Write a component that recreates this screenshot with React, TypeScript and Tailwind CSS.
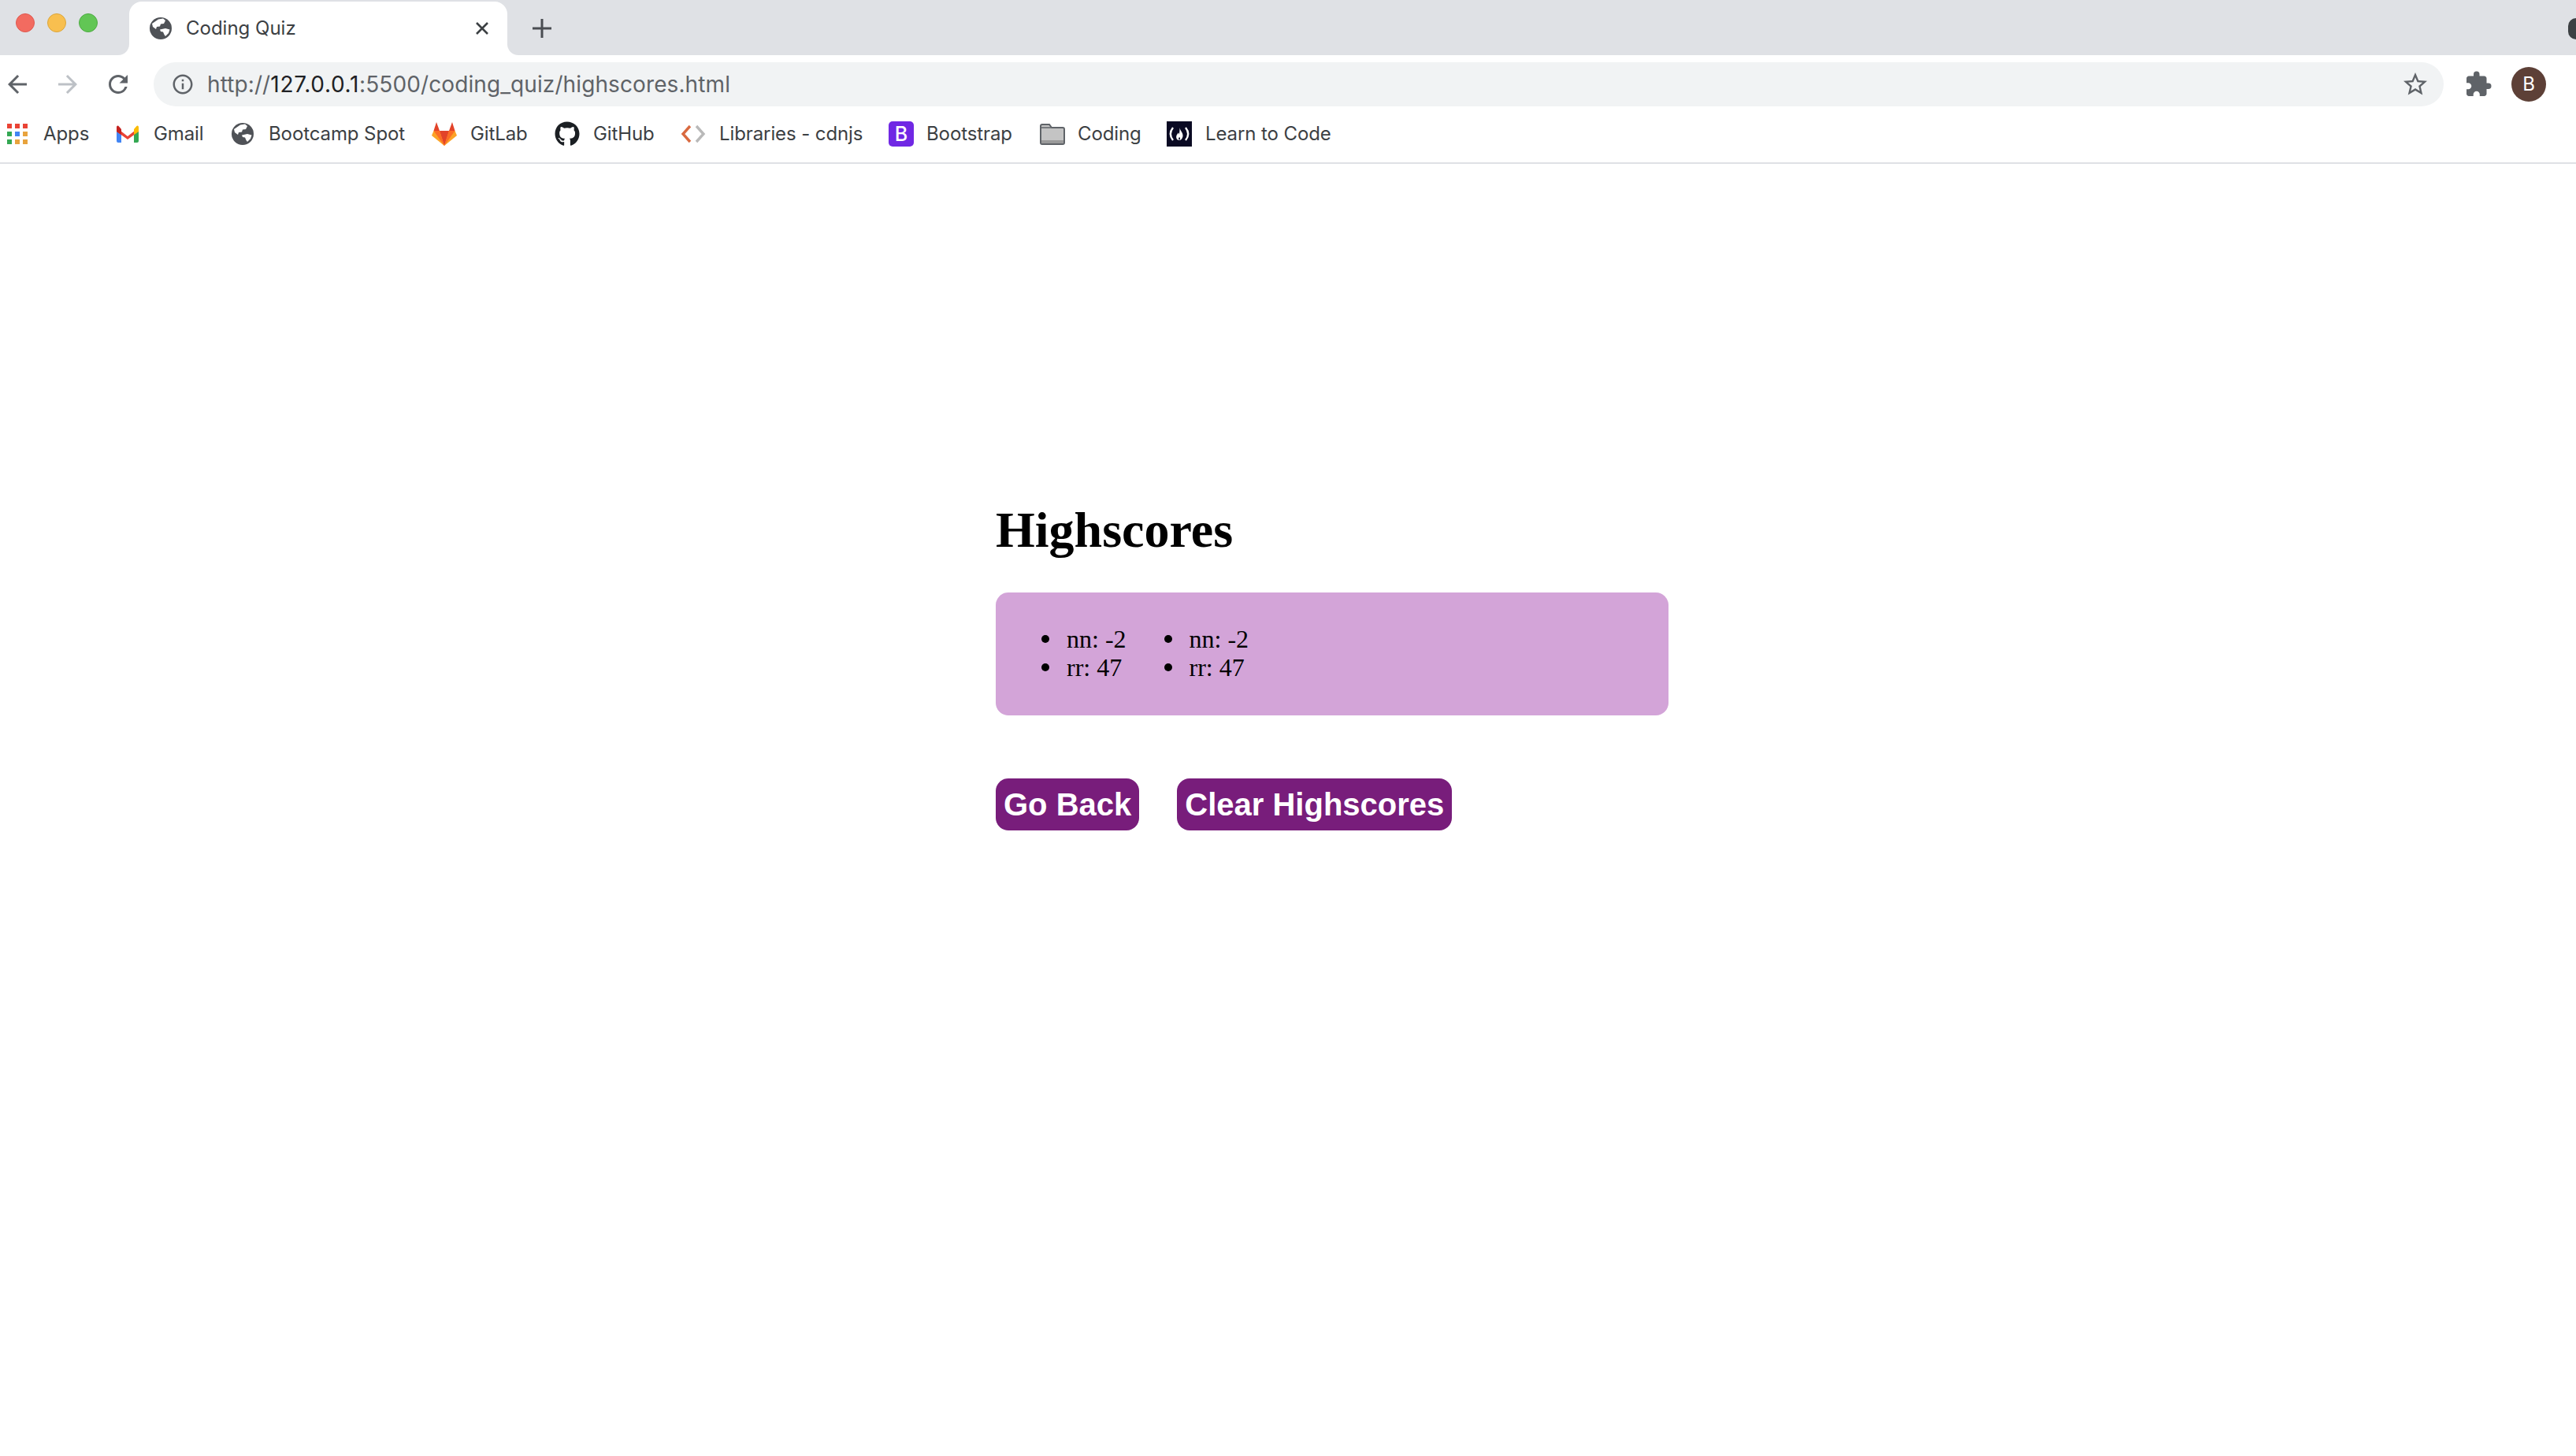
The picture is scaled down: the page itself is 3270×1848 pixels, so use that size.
import { FaGithub } from "react-icons/fa";
import { MdArrowBack, MdArrowForward, MdExtension, MdInfoOutline, MdRefresh, MdStarBorder } from "react-icons/md";
import type { ReactNode } from "react";

const Globe = ({ className = "" }: { className?: string }) => (
  <svg viewBox="0 0 28 28" className={`h-7 w-7 shrink-0 ${className}`}>
    <circle cx="14" cy="14" r="14" fill="#4f5257" />
    <path d="M11 2.500 17 1.500 20 4 18 8 14 8.500 13 11.500 9 12 8 15 4 12 3 8Z" fill="#fff" />
    <path d="M13 15.500 20 14 25.500 15.500 24 20 20 24 18.500 22 17 18.500 14 18Z" fill="#fff" />
  </svg>
);

const Gmail = () => (
  <svg viewBox="0 0 28 22" className="h-[22px] w-7 shrink-0">
    <path d="M0 2V20a2 2 0 0 0 2 2H6V9Z" fill="#4285f4" />
    <path d="M28 2V20a2 2 0 0 1-2 2H22V9Z" fill="#34a853" />
    <path d="M0 3 14 14 28 3V8L14 18 0 8Z" fill="#ea4335" />
    <path d="M22 5 25 1.500C26 0 28 0 28 3V8L22 12Z" fill="#fbbc04" />
    <path d="M6 5 3 1.500C2 0 0 0 0 3V8L6 12Z" fill="#c5221f" />
  </svg>
);

const GitLab = () => (
  <svg viewBox="0 0 32 32" className="h-8 w-8 shrink-0">
    <path d="M16 31 0 18 2.500 12H29.500L32 18Z" fill="#fca326" />
    <path d="M16 31 10 12H22Z" fill="#e24329" />
    <path d="M16 31 10 12H2.500Z" fill="#fc6d26" />
    <path d="M16 31 22 12H29.500Z" fill="#fc6d26" />
    <path d="M2.500 12 6 1 10 12Z" fill="#e24329" />
    <path d="M29.500 12 26 1 22 12Z" fill="#e24329" />
  </svg>
);

const Bookmark = ({ icon, label, width }: { icon: ReactNode; label: string; width: string }) => (
  <div className={`flex items-center ${width}`}>
    {icon}
    <span className="whitespace-nowrap text-[24px] leading-none tracking-[-0.1px] text-[#3c4043]">{label}</span>
  </div>
);

const colours = ["#ea4335", "#ea4335", "#ea4335", "#34a853", "#4285f4", "#e8a33d", "#34a853", "#e8a33d", "#e8a33d"];

export default function App() {
  return (
    <div className="min-h-[1848px] bg-white font-['Inter','Liberation_Sans',sans-serif]">
      {/* tab strip */}
      <div className="flex h-[70px] items-start bg-[#dfe1e5] pt-[2px]">
        <div className="flex h-[54px] items-center gap-[16px] pl-[20px]">
          <span className="h-6 w-6 rounded-full border border-[#e0584f] bg-[#f26b60]" />
          <span className="h-6 w-6 rounded-full border border-[#dba63c] bg-[#f8bf4f]" />
          <span className="h-6 w-6 rounded-full border border-[#4eab43] bg-[#62c655]" />
        </div>
        <div className="relative ml-[40px] flex h-[68px] w-[480px] items-center rounded-t-[16px] bg-white pl-[26px] pr-[22px]">
          <span className="absolute -left-[14px] bottom-0 h-[14px] w-[14px] bg-white" />
          <span className="absolute -left-[14px] bottom-0 h-[14px] w-[14px] rounded-br-[14px] bg-[#dfe1e5]" />
          <span className="absolute -right-[14px] bottom-0 h-[14px] w-[14px] bg-white" />
          <span className="absolute -right-[14px] bottom-0 h-[14px] w-[14px] rounded-bl-[14px] bg-[#dfe1e5]" />
          <Globe />
          <span className="ml-[18px] flex-1 text-[24px] leading-none text-[#3c4043]">Coding Quiz</span>
          <svg viewBox="0 0 20 20" className="h-5 w-5"><path d="M3 3 17 17M17 3 3 17" stroke="#3c4043" strokeWidth="2.6" /></svg>
        </div>
        <svg viewBox="0 0 24 24" className="ml-[32px] mt-[22px] h-6 w-6"><path d="M12 0V24M0 12H24" stroke="#4a4d52" strokeWidth="3" /></svg>
        <div className="ml-auto mt-[21px] h-[27px] w-[10px] rounded-l-full bg-[#3c4043]" />
      </div>

      {/* toolbar */}
      <div className="flex h-[75px] items-center pb-[3px] pt-[1px]">
        <MdArrowBack className="ml-[4px] h-9 w-9 text-[#5f6368]" />
        <MdArrowForward className="ml-[28px] h-9 w-9 text-[#bdc1c6]" />
        <MdRefresh className="ml-[28px] h-9 w-9 text-[#5f6368]" />
        <div className="ml-[27px] flex h-[56px] w-[2907px] items-center rounded-full bg-[#f1f3f4] pl-[22px] pr-[18px]">
          <MdInfoOutline className="h-[30px] w-[30px] text-[#5f6368]" />
          <span className="ml-[16px] text-[28px] leading-none tracking-[0.1px] text-[#5f6368]">
            http://<span className="tracking-[0.7px] text-[#202124]">127.0.0.1</span>:5500/coding_quiz/highscores.html
          </span>
          <MdStarBorder className="ml-auto h-9 w-9 text-[#5f6368]" />
        </div>
        <MdExtension className="ml-[26px] h-9 w-9 text-[#5f6368]" />
        <div className="ml-[24px] flex h-11 w-11 items-center justify-center rounded-full bg-[#5d4037] text-[24px] leading-none text-white">B</div>
      </div>

      {/* bookmarks */}
      <div className="flex h-[63px] items-center border-b-2 border-[#dfe1e5] pb-[11px] pl-[8px]">
        <Bookmark
          width="w-[140px] gap-[20px]"
          label="Apps"
          icon={
            <div className="ml-px grid h-[26px] w-[26px] shrink-0 grid-cols-3 gap-[4px]">
              {colours.map((c, i) => (
                <span key={i} className="h-full w-full" style={{ background: c }} />
              ))}
            </div>
          }
        />
        <Bookmark width="w-[146px] gap-[19px]" label="Gmail" icon={<Gmail />} />
        <Bookmark width="w-[254px] gap-[19px]" label="Bootcamp Spot" icon={<Globe />} />
        <Bookmark width="w-[156px] gap-[17px]" label="GitLab" icon={<GitLab />} />
        <Bookmark width="w-[160px] gap-[17px]" label="GitHub" icon={<FaGithub className="h-8 w-8 shrink-0 text-[#1b1f23]" />} />
        <Bookmark
          width="w-[264px] gap-[17px]"
          label="Libraries - cdnjs"
          icon={
            <svg viewBox="0 0 32 28" className="h-7 w-8 shrink-0" fill="none" strokeWidth="3.4">
              <path d="M12 4 3 14 12 24" stroke="#d9693f" />
              <path d="M20 4 29 14 20 24" stroke="#b9b9b9" />
            </svg>
          }
        />
        <Bookmark
          width="w-[192px] gap-[16px]"
          label="Bootstrap"
          icon={
            <div className="flex h-8 w-8 shrink-0 items-center justify-center rounded-[5px] bg-[#7028e4] text-[25px] font-medium leading-none text-white">B</div>
          }
        />
        <Bookmark
          width="w-[161px] gap-[16px]"
          label="Coding"
          icon={
            <svg viewBox="0 0 32 28" className="h-7 w-8 shrink-0">
              <path d="M1 4a2 2 0 0 1 2-2h9l3 4h14a2 2 0 0 1 2 2v17a2 2 0 0 1-2 2H3a2 2 0 0 1-2-2Z" fill="#c4c4c4" stroke="#5f6368" strokeWidth="2" />
              <path d="M2 6h12" stroke="#5f6368" strokeWidth="1.5" />
              <path d="M2 22h28v4H2Z" fill="#9a9a9a" />
            </svg>
          }
        />
        <Bookmark
          width="gap-[17px]"
          label="Learn to Code"
          icon={
            <svg viewBox="0 0 32 32" className="h-8 w-8 shrink-0">
              <rect width="32" height="32" fill="#0a0a23" />
              <path d="M8 8C4 13 4 19 8 24M24 8C28 13 28 19 24 24" stroke="#fff" strokeWidth="2.4" fill="none" />
              <path d="M16.500 8C17 12 21 14 20.500 19C20 22 18 24 16 24C13 24 11.500 21 12.500 18C13 16.500 14 16 14.500 14.500C15.500 15 15.500 16 15.500 17C16.500 14 16.500 11 16.500 8Z" fill="#fff" />
              <path d="M16 20C17 20.500 17.500 22 16.500 23.500C15 23.500 14.500 21.500 16 20Z" fill="#0a0a23" />
            </svg>
          }
        />
      </div>

      {/* page */}
      <div className="ml-[1264px] w-[854px] pt-[428px] font-['Liberation_Serif',serif] text-black">
        <h1 className="text-[64px] font-bold leading-[74px]">Highscores</h1>
        <div className="mt-[42px] flex h-[156px] items-start rounded-[16px] bg-[#d3a4d8] pl-[10px] pt-[41px]">
          {[0, 1].map((n) => (
            <ul key={n} className="list-none pl-[80px] text-[32px] leading-[36px]">
              {["nn: -2", "rr: 47"].map((row) => (
                <li key={row} className="relative">
                  <span className="absolute -left-[32px] top-[13px] h-[10px] w-[10px] rounded-full bg-black" />
                  {row}
                </li>
              ))}
            </ul>
          ))}
        </div>
        <div className="mt-[80px] flex gap-[48px] font-['Liberation_Sans',sans-serif]">
          <button className="h-[66px] rounded-[16px] bg-[#781d7b] px-[10px] text-[40px] font-bold leading-none text-white">Go Back</button>
          <button className="h-[66px] rounded-[16px] bg-[#781d7b] px-[10px] text-[40px] font-bold leading-none text-white">Clear Highscores</button>
        </div>
      </div>
    </div>
  );
}
